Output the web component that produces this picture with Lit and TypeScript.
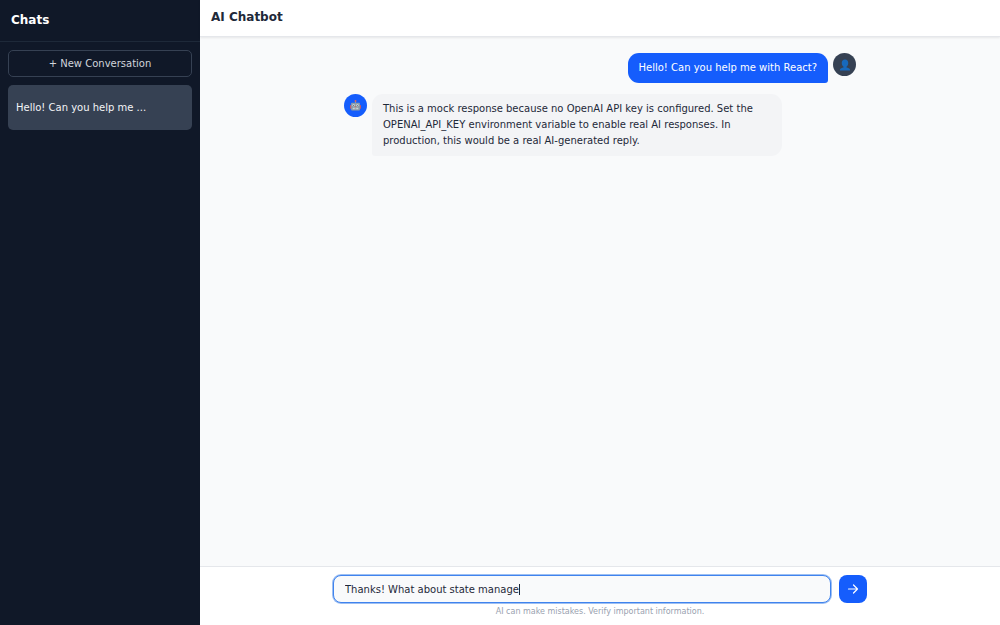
import { LitElement, html, css, svg } from "lit";
import { customElement, property, query, state } from "lit/decorators.js";
import { classMap } from "lit/directives/class-map.js";
import { styleMap } from "lit/directives/style-map.js";

interface Message {
  role: "user" | "assistant";
  text: string;
}

const robotIcon = html`<svg viewBox="0 0 20 20" width="11" height="11" aria-hidden="true">
  ${svg`
    <rect x="0" y="9" width="3" height="7" rx="1" fill="#c55a6b" />
    <rect x="17" y="9" width="3" height="7" rx="1" fill="#c55a6b" />
    <rect x="9.2" y="2" width="1.6" height="4" fill="#90a4ae" />
    <circle cx="10" cy="2" r="1.8" fill="#e0685a" />
    <rect x="2" y="5" width="16" height="14" rx="1.5" fill="#8b9daa" />
    <circle cx="6.500" cy="9.500" r="2" fill="#eef6f6" />
    <circle cx="13.500" cy="9.500" r="2" fill="#eef6f6" />
    <circle cx="6.500" cy="9.500" r="1" fill="#3d4a55" />
    <circle cx="13.500" cy="9.500" r="1" fill="#3d4a55" />
    <path d="M10 10.500l1.400 2.600H8.600z" fill="#d9604c" />
    <rect x="5" y="14.200" width="10" height="2.800" rx="0.800" fill="#dfe6ea" />
    <path d="M7.500 14.200v2.800M10 14.200v2.800M12.500 14.200v2.800" stroke="#5d6b75" stroke-width="0.800" />
  `}
</svg>`;

const personIcon = html`<svg viewBox="0 0 20 20" width="12" height="12" aria-hidden="true">
  ${svg`
    <path
      d="M10 1c-3.600 0-5.400 2.400-5.400 5.700 0 2.700 1.200 4.900 2.900 6.100v1.200c-2.600.5-5.300 1.400-5.800 3.200V19h16.600v-1.800c-.5-1.800-3.200-2.700-5.800-3.200v-1.200c1.700-1.200 2.900-3.400 2.900-6.100C15.400 3.400 13.600 1 10 1z"
      fill="#1769bd"
    />
  `}
</svg>`;

@customElement("chat-message")
class ChatMessage extends LitElement {
  @property({ attribute: false }) message!: Message;

  static styles = css`
    :host {
      display: block;
    }
    .row {
      display: flex;
      align-items: flex-start;
      gap: 5px;
    }
    .row.user {
      flex-direction: row-reverse;
    }
    .avatar {
      flex: none;
      display: grid;
      place-items: center;
      width: 23px;
      height: 23px;
      border-radius: 50%;
      background: #155dfc;
    }
    .user .avatar {
      background: #364153;
    }
    .bubble {
      margin: 0;
      max-width: 80%;
      box-sizing: border-box;
      padding: 7px 11px;
      border-radius: 11px;
      border-bottom-left-radius: 3px;
      background: #f3f4f6;
      color: #1e2939;
      line-height: 16px;
    }
    .user .bubble {
      border-bottom-left-radius: 11px;
      border-bottom-right-radius: 3px;
      background: #155dfc;
      color: #fff;
    }
  `;

  render() {
    const user = this.message.role === "user";
    return html`<article class=${classMap({ row: true, user })}>
      <span class="avatar">${user ? personIcon : robotIcon}</span>
      <p class="bubble">${this.message.text}</p>
    </article>`;
  }
}

@customElement("chat-composer")
class ChatComposer extends LitElement {
  @state() private value = "Thanks! What about state manage";
  @state() private caret = 0;
  @query("input") private input!: HTMLInputElement;

  static styles = css`
    :host {
      display: block;
    }
    .form {
      display: flex;
      gap: 8px;
    }
    .field {
      position: relative;
      flex: 1;
      display: flex;
    }
    .input {
      flex: 1;
      min-width: 0;
      height: 28px;
      box-sizing: border-box;
      padding: 0 11px;
      border: 1px solid #3f83ee;
      border-radius: 8px;
      box-shadow: 0 0 0 1px #9dbff2;
      outline: none;
      background: #f9fafb;
      color: #1e2939;
      font: inherit;
      caret-color: transparent;
    }
    .caret {
      position: absolute;
      top: 9px;
      width: 1px;
      height: 11px;
      background: #1e2939;
    }
    .send {
      display: grid;
      place-items: center;
      width: 28px;
      height: 28px;
      padding: 0;
      border: 0;
      border-radius: 8px;
      background: #155dfc;
      color: #fff;
      cursor: pointer;
    }
  `;

  firstUpdated() {
    this.input.focus();
    this.placeCaret();
  }

  private placeCaret() {
    const context = document.createElement("canvas").getContext("2d")!;
    const style = getComputedStyle(this.input);
    context.font = `${style.fontSize} ${style.fontFamily}`;
    const before = this.value.slice(0, this.input.selectionEnd ?? this.value.length) || this.value;
    this.caret = Math.round(context.measureText(before).width) + 12;
  }

  private onInput() {
    this.value = this.input.value;
    this.placeCaret();
  }

  render() {
    return html`<form class="form" @submit=${(e: Event) => e.preventDefault()}>
      <div class="field">
        <input class="input" type="text" aria-label="Message" .value=${this.value} @input=${this.onInput} />
        <span class="caret" style=${styleMap({ left: `${this.caret}px` })}></span>
      </div>
      <button class="send" type="submit" aria-label="Send">
        <svg viewBox="0 0 12 12" width="12" height="12" fill="none" stroke="currentColor"
          stroke-width="1.2" stroke-linecap="round" stroke-linejoin="round" aria-hidden="true">
          <path d="M1.500 6h9M6.500 2l4 4-4 4" />
        </svg>
      </button>
    </form>`;
  }
}

@customElement("app-root")
class AppRoot extends LitElement {
  @state() private conversations = ["Hello! Can you help me ..."];
  @state() private messages: Message[] = [
    { role: "user", text: "Hello! Can you help me with React?" },
    {
      role: "assistant",
      text: "This is a mock response because no OpenAI API key is configured. Set the OPENAI_API_KEY environment variable to enable real AI responses. In production, this would be a real AI-generated reply.",
    },
  ];

  static styles = css`
    :host {
      display: grid;
      grid-template-columns: 200px minmax(0, 1fr);
      height: 100vh;
      font-family: "DejaVu Sans", sans-serif;
      font-size: 10px;
    }
    .sidebar {
      display: flex;
      flex-direction: column;
      background: #101828;
      color: #fff;
    }
    .title {
      margin: 0;
      font-size: 12px;
      line-height: 20px;
      font-weight: 700;
    }
    .brand {
      padding: 10px 11px 11px;
      border-bottom: 1px solid #1e2939;
    }
    .list {
      display: flex;
      flex-direction: column;
      gap: 8px;
      padding: 8px;
    }
    .new,
    .chat {
      width: 100%;
      box-sizing: border-box;
      border-radius: 5px;
      font: inherit;
      cursor: pointer;
    }
    .new {
      height: 27px;
      padding: 0 8px;
      border: 1px solid #364153;
      background: transparent;
      color: #d1d5dc;
    }
    .chat {
      height: 45px;
      padding: 0 8px;
      border: 0;
      background: #364153;
      color: #f3f4f6;
      text-align: left;
    }
    .main {
      display: flex;
      flex-direction: column;
      min-width: 0;
      background: #f9fafb;
    }
    .header {
      padding: 7px 11px 9px;
      border-bottom: 1px solid #e5e7eb;
      background: #fff;
      color: #1e2939;
      box-shadow: 0 1px 2px rgba(0, 0, 0, 0.08);
    }
    .scroll {
      flex: 1;
      min-height: 0;
      overflow: auto;
    }
    .thread,
    .composer {
      max-width: 534px;
      box-sizing: border-box;
      margin: 0 auto;
    }
    .thread {
      display: flex;
      flex-direction: column;
      gap: 11px;
      padding: 16px 11px;
    }
    .footer {
      padding: 8px 11px;
      border-top: 1px solid #e5e7eb;
      background: #fff;
    }
    .note {
      margin: 3px 0 0;
      color: #99a1af;
      font-size: 8px;
      line-height: 11px;
      text-align: center;
    }
  `;

  render() {
    return html`
      <aside class="sidebar">
        <div class="brand"><h2 class="title">Chats</h2></div>
        <nav class="list">
          <button class="new" type="button">+ New Conversation</button>
          ${this.conversations.map((name) => html`<button class="chat" type="button">${name}</button>`)}
        </nav>
      </aside>
      <main class="main">
        <header class="header"><h1 class="title">AI Chatbot</h1></header>
        <div class="scroll">
          <div class="thread">
            ${this.messages.map((message) => html`<chat-message .message=${message}></chat-message>`)}
          </div>
        </div>
        <footer class="footer">
          <div class="composer">
            <chat-composer></chat-composer>
            <p class="note">AI can make mistakes. Verify important information.</p>
          </div>
        </footer>
      </main>
    `;
  }
}
